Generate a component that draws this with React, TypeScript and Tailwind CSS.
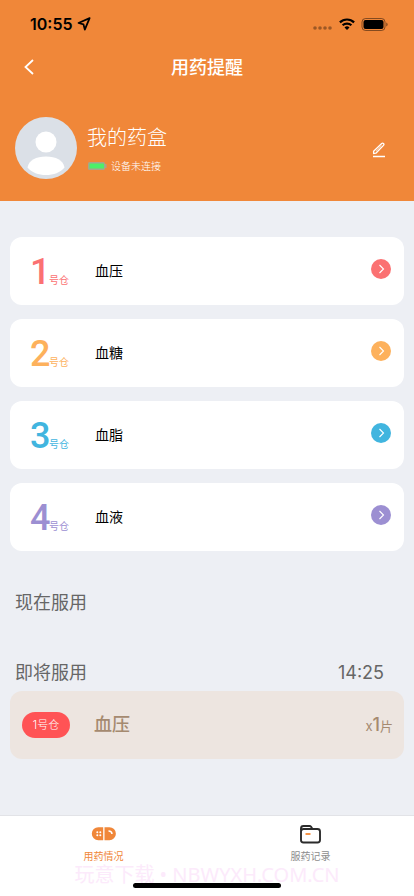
import React from 'react';

const slots = [
  { no: 1, name: '血压', text: 'text-[#fb7172]', bg: 'bg-[#fb7172]' },
  { no: 2, name: '血糖', text: 'text-[#fdb15c]', bg: 'bg-[#fdb15c]' },
  { no: 3, name: '血脂', text: 'text-[#41b5df]', bg: 'bg-[#41b5df]' },
  { no: 4, name: '血液', text: 'text-[#9c8fd2]', bg: 'bg-[#9c8fd2]' },
];

function StatusBar() {
  return (
    <div className="flex h-12 items-center justify-between pr-[26px] pl-[30px] text-black">
      <div className="flex items-center gap-1">
        <span className="text-base leading-5 font-semibold">10:55</span>
        <svg width="14" height="14" viewBox="0 0 14 14" fill="none" aria-hidden="true">
          <path d="M12.6 1.2 1.5 6l5 1.4L7.8 12.6z" stroke="currentColor" strokeWidth="1.8" strokeLinejoin="round" />
        </svg>
      </div>
      <div className="flex items-center gap-[6px]">
        <svg width="20" height="14" viewBox="0 0 20 14" fill="#000" fillOpacity="0.35" aria-hidden="true">
          <circle cx="2" cy="11" r="1.8" />
          <circle cx="7" cy="11" r="1.8" />
          <circle cx="12" cy="11" r="1.8" />
          <circle cx="17" cy="11" r="1.8" />
        </svg>
        <svg width="16" height="12" viewBox="0 0 16 12" aria-hidden="true">
          <g fill="none" stroke="#000" strokeWidth="2.2">
            <path d="M.9 4.4a10.2 10.2 0 0 1 14.2 0" />
            <path d="M3.6 7.3a6.4 6.4 0 0 1 8.8 0" />
          </g>
          <path d="M8 12 5.5 9.4a3.6 3.6 0 0 1 5 0z" />
        </svg>
        <svg width="27" height="13" viewBox="0 0 27 13" aria-hidden="true">
          <rect x="1" y=".5" width="23" height="12" rx="3.5" fill="none" stroke="#000" strokeOpacity=".45" />
          <rect x="2.5" y="2" width="20" height="9" rx="2" />
          <path d="M25.3 4.5v4q1.300-.6 1.300-2t-1.300-2z" fillOpacity=".5" />
        </svg>
      </div>
    </div>
  );
}

function Avatar() {
  return (
    <svg className="shrink-0" width="62" height="62" viewBox="0 0 62 62" role="img" aria-label="头像">
      <circle cx="31" cy="31" r="31" fill="#dbe0e7" />
      <circle cx="31" cy="25" r="10.5" fill="#fff" />
      <path d="M12.500 50.500C14 43 21 39.500 31 39.500s17 3.500 18.500 11C45.500 55.500 38.500 58 31 58s-14.500-2.500-18.500-7.500z" fill="#fff" />
    </svg>
  );
}

function Header() {
  return (
    <header className="bg-[#f08739] text-white">
      <StatusBar />
      <div className="grid h-10 grid-cols-[1fr_auto_1fr] items-center px-[22px]">
        <button type="button" aria-label="返回" className="w-4">
          <svg width="14" height="18" viewBox="0 0 14 18" fill="none" aria-hidden="true">
            <path d="M11 1 3.500 8l7.500 7" stroke="currentColor" strokeWidth="1.800" />
          </svg>
        </button>
        <h1 className="text-lg leading-7 font-medium">用药提醒</h1>
      </div>
      <div className="flex items-center gap-[10px] px-[15px] pt-[29px] pb-[22px]">
        <Avatar />
        <div className="flex flex-1 flex-col gap-1.5 pt-0.5">
          <h2 className="text-xl leading-7 font-light">我的药盒</h2>
          <p className="flex items-center gap-[3px] text-[10px] leading-4 font-light">
            <svg width="21" height="10" viewBox="0 0 21 10" aria-hidden="true">
              <rect x="1" y="1" width="17" height="8" rx="1.5" fill="#a7a58c" />
              <path d="M18 3h1.500v4H18z" fill="#a7a58c" />
              <rect x="2.5" y="2.5" width="14.5" height="5" rx=".5" fill="#4cf069" />
            </svg>
            设备未连接
          </p>
        </div>
        <button type="button" aria-label="编辑" className="mt-1 mr-[13px]">
          <svg width="14" height="16" viewBox="0 0 14 16" fill="none" stroke="currentColor" aria-hidden="true">
            <path d="M1.600 11.500v-2.300L9.700 1.500q.9-.8 1.800 0t0 1.900L3.900 11.200z" strokeWidth="1.300" strokeLinejoin="round" />
            <path d="M4 9.200 9.500 3.800" strokeWidth=".7" />
            <path d="M1 14.500h12" strokeWidth="1.500" />
          </svg>
        </button>
      </div>
    </header>
  );
}

function SlotCard({ slot }: { slot: (typeof slots)[number] }) {
  return (
    <li className="flex h-[68px] items-center rounded-xl bg-white pr-[13px] pl-5">
      <div className={`flex w-[65px] items-baseline pt-0.5 ${slot.text}`}>
        <span className="w-[19px] font-[Roboto,sans-serif] text-4xl leading-10 font-medium">{slot.no}</span>
        <span className="text-[10px] leading-4">号仓</span>
      </div>
      <h3 className="flex-1 text-sm leading-5 text-black">{slot.name}</h3>
      <button type="button" aria-label={`查看${slot.no}号仓`} className={`mb-1 flex size-5 items-center justify-center rounded-full text-white ${slot.bg}`}>
        <svg width="10" height="10" viewBox="0 0 10 10" fill="none" aria-hidden="true">
          <path d="m3.500 1 4 4-4 4" stroke="currentColor" strokeWidth="1.100" />
        </svg>
      </button>
    </li>
  );
}

function TabBar() {
  return (
    <nav className="sticky bottom-0 h-[81px] border-t border-[#e2e3e7] bg-white">
      <div className="grid grid-cols-2 pt-2">
        <a href="#usage" aria-current="page" className="flex flex-col items-center gap-1 text-[10px] leading-4 text-[#f08739]">
          <svg width="26" height="20" viewBox="0 0 26 20" aria-hidden="true">
            <path d="M12.200 3.200H7.300a6.500 6.500 0 0 0 0 13h4.900zM13.500 3.200h4.900a6.500 6.500 0 0 1 0 13h-4.900z" fill="currentColor" />
            <g fill="#fff">
              <circle cx="6.3" cy="8.2" r="1" />
              <circle cx="9.3" cy="8.2" r="1" />
              <circle cx="6.3" cy="11.2" r="1" />
              <circle cx="9.3" cy="11.2" r="1" />
            </g>
            <path d="M17.500 7q3.300 0 3.500 3" fill="none" stroke="#fff" strokeWidth="1.500" />
          </svg>
          用药情况
        </a>
        <a href="#records" className="flex flex-col items-center gap-1 text-[10px] leading-4 text-[#8d8d8d]">
          <svg width="24" height="20" viewBox="0 0 24 20" fill="none" aria-hidden="true">
            <path d="M2 6.500V4.500Q2 2 4.500 2h6q1 0 1.600.8l1.200 2" stroke="#2b2b2b" strokeWidth="1.900" />
            <rect x="2" y="5" width="19" height="13.500" rx="2.500" stroke="#2b2b2b" strokeWidth="1.900" />
            <path d="M6.500 10h5" stroke="#f58a34" strokeWidth="1.800" />
          </svg>
          服药记录
        </a>
      </div>
      <p className="pointer-events-none absolute inset-x-0 bottom-[7px] text-center font-['Noto_Sans','Noto_Sans_CJK_SC',sans-serif] text-[20px] leading-7 whitespace-nowrap text-[#fceafb]">
        玩意下载 • NBWYXH.COM.CN
      </p>
      <div className="absolute bottom-2 left-1/2 h-[5px] w-[148px] -translate-x-1/2 rounded-full bg-black" />
    </nav>
  );
}

export default function App() {
  return (
    <div className="flex min-h-screen flex-col bg-[#edeff4] font-[Inter,'Noto_Sans_CJK_SC',sans-serif]">
      <Header />
      <main className="flex-1 px-[10px] pt-9 pb-6">
        <ul className="flex flex-col gap-[14px]">
          {slots.map((slot) => (
            <SlotCard key={slot.no} slot={slot} />
          ))}
        </ul>
        <section className="mt-[38px] px-[5px]">
          <h2 className="text-lg leading-7 text-[#666]">现在服用</h2>
        </section>
        <section className="mt-[42px]">
          <div className="flex items-center justify-between pr-5 pl-[5px] text-lg leading-7 text-[#666]">
            <h2>即将服用</h2>
            <time>14:25</time>
          </div>
          <div className="mt-1 flex h-[68px] items-center rounded-xl bg-[#ede5e0] pr-[11px] pl-3 text-[#a58a70]">
            <span className="flex h-[26px] w-12 items-center justify-center rounded-full bg-[#ff5355] text-[11px] leading-4 font-light text-white">
              1号仓
            </span>
            <h3 className="ml-6 flex-1 text-lg leading-7 font-medium">血压</h3>
            <p className="flex items-baseline text-[13px] leading-7">
              x<span className="text-lg leading-7 font-medium">1</span>片
            </p>
          </div>
        </section>
      </main>
      <TabBar />
    </div>
  );
}
